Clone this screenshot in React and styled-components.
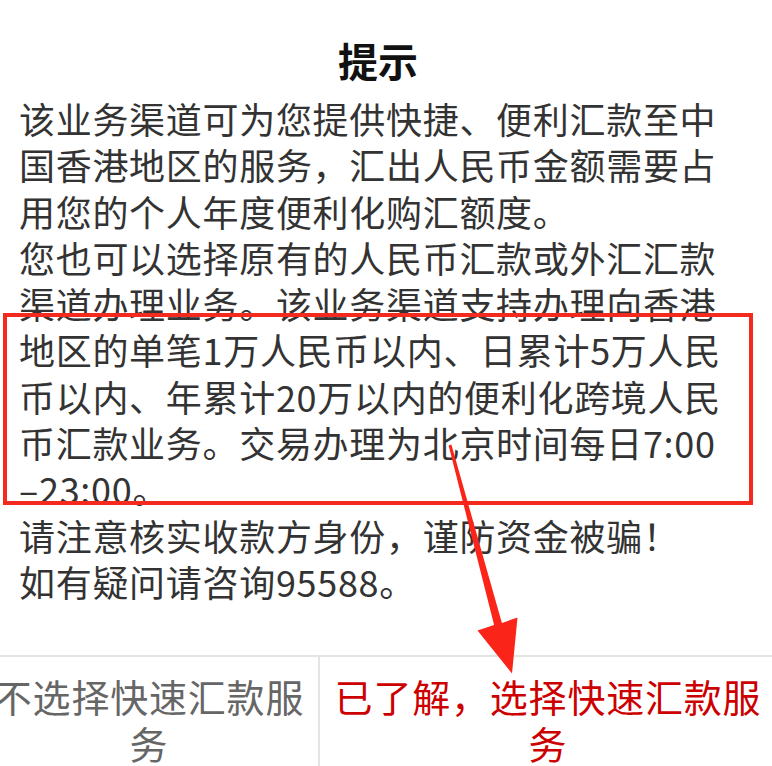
import React from 'react';
import styled, { createGlobalStyle } from 'styled-components';

const GlobalStyle = createGlobalStyle`
  html, body {
    margin: 0;
    padding: 0;
    background: #fff;
  }
  body {
    font-family: "Noto Sans CJK SC", "Noto Sans", sans-serif;
  }
`;

const App = () => {
  return (
    <Screen>
      <GlobalStyle />
      <Title>提示</Title>
      <Body>
        <Para>
          该业务渠道可为您提供快捷、便利汇款至中<br />
          国香港地区的服务，汇出人民币金额需要占<br />
          用您的个人年度便利化购汇额度。
        </Para>
        <Para>
          您也可以选择原有的人民币汇款或外汇汇款<br />
          渠道办理业务。该业务渠道支持办理向香港<br />
          地区的单笔1万人民币以内、日累计5万人民<br />
          币以内、年累计20万以内的便利化跨境人民<br />
          币汇款业务。交易办理为北京时间每日7:00<br />
          –23:00。
        </Para>
        <Para>请注意核实收款方身份，谨防资金被骗！</Para>
        <Para>如有疑问请咨询95588。</Para>
      </Body>
      <Actions>
        <ActionButton>
          不选择快速汇款服<br />务
        </ActionButton>
        <ActionButton primary>
          已了解，选择快速汇款服<br />务
        </ActionButton>
      </Actions>

      {/* annotation overlay */}
      <RedBox />
      <ArrowLayer width="772" height="766" viewBox="0 0 772 766">
        <polygon
          points="448.6,445.4 451.4,444.6 501.9,623 517.5,617.5 512,673.5 477.5,630.5 494.1,625"
          fill="#fb2418"
        />
      </ArrowLayer>
    </Screen>
  );
};

const Screen = styled.div`
  position: relative;
  width: 772px;
  height: 766px;
  overflow: hidden;
  display: flex;
  flex-direction: column;
  background: #fff;
`;

const Title = styled.div`
  padding: 36px 16px 0 0;
  font-size: 40px;
  font-weight: 700;
  line-height: 48px;
  text-align: center;
  color: #111;
`;

const Body = styled.div`
  padding: 11px 0 0 19px;
  font-size: 36px;
  letter-spacing: 0.7px;
  line-height: 46.3px;
  color: #333;
  white-space: nowrap;
`;

const Para = styled.div`
  margin: 0;
`;

const Actions = styled.div`
  margin: auto -4px 0 -20px;
  height: 109px;
  flex-shrink: 0;
  display: grid;
  grid-template-columns: 340px 1fr;
  border-top: 2px solid #e4e4e4;
  overflow: hidden;
`;

const ActionButton = styled.div`
  padding-top: 15px;
  font-size: 38px;
  letter-spacing: 0.8px;
  line-height: 47px;
  text-align: center;
  white-space: nowrap;
  color: ${p => (p.primary ? '#cc0000' : '#666')};
  border-right: ${p => (p.primary ? 'none' : '2px solid #e4e4e4')};
`;

const RedBox = styled.div`
  position: absolute;
  left: 3px;
  top: 313px;
  width: 750px;
  height: 192px;
  box-sizing: border-box;
  border: 4px solid #f42a1f;
  pointer-events: none;
`;

const ArrowLayer = styled.svg`
  position: absolute;
  left: 0;
  top: 0;
  pointer-events: none;
`;

export default App;
